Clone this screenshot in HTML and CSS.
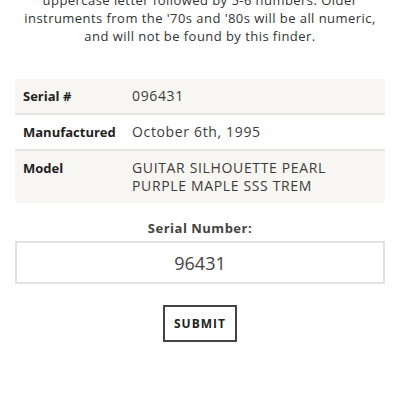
FILE: index.html
```html
<!DOCTYPE html>
<html lang="en">
<head>
<meta charset="utf-8">
<title>Serial Number Finder</title>
<link rel="stylesheet" href="styles.css">
</head>
<body>
<main class="finder">
  <p class="intro">uppercase letter followed by 5-6 numbers. Older instruments from the '70s and '80s will be all numeric, and will not be found by this finder.</p>

  <table class="result">
    <tr class="shaded">
      <th>Serial #</th>
      <td>096431</td>
    </tr>
    <tr>
      <th>Manufactured</th>
      <td>October 6th, 1995</td>
    </tr>
    <tr class="shaded">
      <th>Model</th>
      <td>GUITAR SILHOUETTE PEARL PURPLE MAPLE SSS TREM</td>
    </tr>
  </table>

  <form class="lookup">
    <label class="lookup-label" for="serial">Serial Number:</label>
    <input class="lookup-input" id="serial" type="text" value="96431">
    <button class="lookup-submit" type="button">SUBMIT</button>
  </form>
</main>
</body>
</html>
```

FILE: styles.css
```css
html, body {
  margin: 0;
  padding: 0;
  background: #ffffff;
}

body {
  font-family: "Open Sans", "Liberation Sans", sans-serif;
  color: #333333;
  font-size: 13px;
}

.finder {
  padding: 0 15px;
}

.intro {
  margin: -9px 0 0;
  text-align: center;
  line-height: 18px;
  letter-spacing: 0.45px;
  color: #333333;
}

.result {
  width: 100%;
  margin-top: 34px;
  border-collapse: collapse;
  table-layout: fixed;
}

.result tr {
  border-bottom: 2px solid #e8e6e2;
}

.result tr:last-child {
  border-bottom: none;
}

.result tr.shaded {
  background: #f8f6f2;
}

.result th,
.result td {
  padding: 8px 8px;
  line-height: 18px;
  vertical-align: top;
  text-align: left;
}

.result th {
  width: 93px;
  font-weight: 700;
  color: #222222;
  white-space: nowrap;
}

.result td {
  font-size: 14px;
  letter-spacing: 0.65px;
  color: #3c3c3c;
  padding-right: 30px;
}

.lookup {
  display: flex;
  flex-direction: column;
  align-items: center;
  margin-top: 16px;
}

.lookup-label {
  font-weight: 700;
  color: #444444;
  line-height: 18px;
  letter-spacing: 0.5px;
}

.lookup-input {
  box-sizing: border-box;
  width: 100%;
  height: 43px;
  margin-top: 4px;
  border: 2px solid #e2e2e2;
  font-family: inherit;
  font-size: 18px;
  color: #444444;
  text-align: center;
  outline: none;
}

.lookup-submit {
  margin-top: 21px;
  width: 74px;
  height: 37px;
  padding: 0;
  background: #ffffff;
  border: 2px solid #444444;
  font-family: inherit;
  font-size: 12px;
  font-weight: 700;
  letter-spacing: 1px;
  color: #222222;
}
```
